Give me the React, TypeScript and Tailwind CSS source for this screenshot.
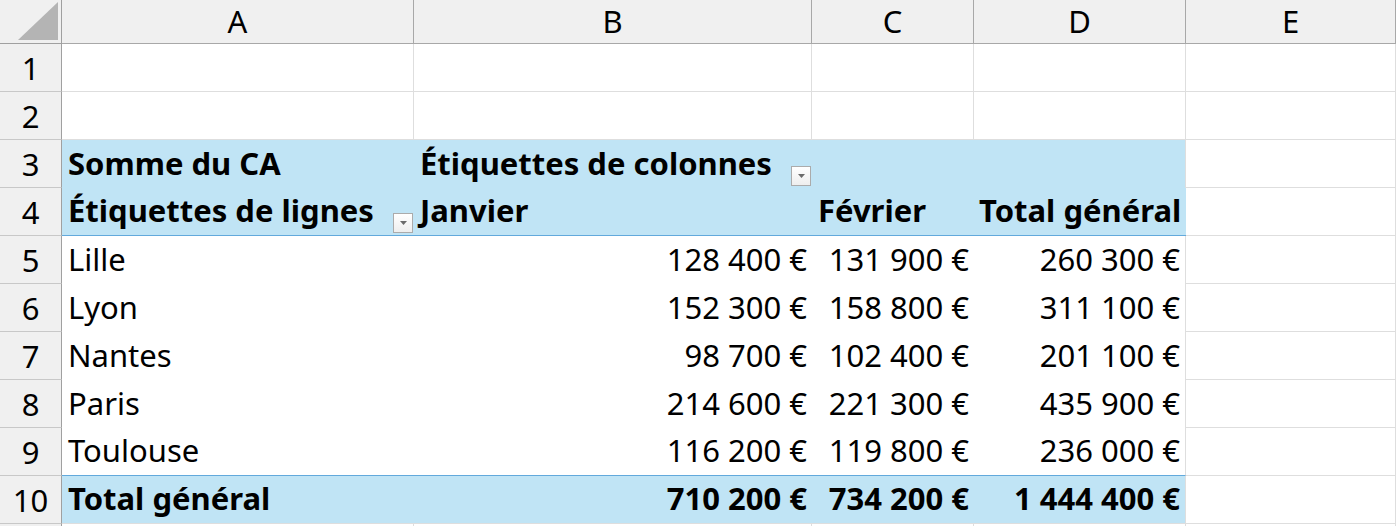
import React from "react";

const FONT = { fontFamily: '"Noto Sans", "Open Sans", Arial, sans-serif' };

function Dropdown() {
  return (
    <div className="absolute right-[1px] bottom-[2px] w-[20px] h-[20px] border border-[#ababab] bg-gradient-to-b from-white to-[#eeeeee] flex items-center justify-center">
      <svg width="7" height="4" viewBox="0 0 7 4">
        <path d="M0 0 H7 L3.5 4 Z" fill="#6b6b6b" />
      </svg>
    </div>
  );
}

type CellProps = {
  children?: React.ReactNode;
  cls?: string;
};

function Cell({ children, cls = "" }: CellProps) {
  return <div className={"relative flex items-end overflow-visible whitespace-nowrap " + cls}>{children}</div>;
}

const G = "border-r border-b border-[#dedede] bg-white";
const BLUE = "bg-[#c0e4f5]";
const ROWH = "border-r border-b border-[#c8c8c8] bg-[#f0f0f0] justify-center items-center text-[31px] text-black";

export default function App() {
  const rows: { city: string; b: string; c: string; d: string }[] = [
    { city: "Lille", b: "128 400 €", c: "131 900 €", d: "260 300 €" },
    { city: "Lyon", b: "152 300 €", c: "158 800 €", d: "311 100 €" },
    { city: "Nantes", b: "98 700 €", c: "102 400 €", d: "201 100 €" },
    { city: "Paris", b: "214 600 €", c: "221 300 €", d: "435 900 €" },
    { city: "Toulouse", b: "116 200 €", c: "119 800 €", d: "236 000 €" },
  ];

  const txt = "text-[31px] leading-[40px] text-black pb-[5px]";
  const rightTxt = txt + " justify-end pr-[5px]";
  const leftTxt = txt + " pl-[6px]";

  return (
    <div className="w-[1396px] h-[526px] overflow-hidden bg-white" style={FONT}>
      <div className="grid grid-cols-[62px_352px_398px_162px_212px_210px] grid-rows-[44px_repeat(11,48px)]">
        {/* Header row */}
        <div className="relative bg-[#f0f0f0] border-r border-b border-[#a0a0a0]">
          <svg className="absolute left-[18px] top-[2px]" width="40" height="38" viewBox="0 0 40 38">
            <path d="M40 0 V38 H0 Z" fill="#b4b4b4" />
          </svg>
        </div>
        {["A", "B", "C", "D", "E"].map((l) => (
          <div
            key={l}
            className="bg-[#f0f0f0] border-r border-b border-[#a8a8a8] flex items-center justify-center text-[31px] text-black"
          >
            {l}
          </div>
        ))}

        {/* Row 1 */}
        <Cell cls={ROWH + " border-r-[#a0a0a0]"}>1</Cell>
        <Cell cls={G} />
        <Cell cls={G} />
        <Cell cls={G} />
        <Cell cls={G} />
        <Cell cls={G} />

        {/* Row 2 */}
        <Cell cls={ROWH + " border-r-[#a0a0a0]"}>2</Cell>
        <Cell cls={G} />
        <Cell cls={G} />
        <Cell cls={G} />
        <Cell cls={G} />
        <Cell cls={G} />

        {/* Row 3 */}
        <Cell cls={ROWH + " border-r-[#a0a0a0]"}>3</Cell>
        <Cell cls={BLUE + " font-bold " + leftTxt}>Somme du CA</Cell>
        <Cell cls={BLUE + " font-bold " + leftTxt}>
          Étiquettes de colonnes
          <Dropdown />
        </Cell>
        <Cell cls={BLUE} />
        <Cell cls={BLUE + " border-r border-[#dedede]"} />
        <Cell cls={G} />

        {/* Row 4 */}
        <Cell cls={ROWH + " border-r-[#a0a0a0]"}>4</Cell>
        <Cell cls={BLUE + " font-bold border-b border-[#62a9dc] " + leftTxt}>
          Étiquettes de lignes
          <Dropdown />
        </Cell>
        <Cell cls={BLUE + " font-bold border-b border-[#62a9dc] " + leftTxt}>Janvier</Cell>
        <Cell cls={BLUE + " font-bold border-b border-[#62a9dc] " + leftTxt}>Février</Cell>
        <Cell cls={BLUE + " font-bold border-b border-[#62a9dc] " + txt + " pl-[5px]"}>Total général</Cell>
        <Cell cls={G} />

        {/* Data rows */}
        {rows.map((r, i) => {
          const last = i === rows.length - 1;
          const bb = last ? " border-b border-[#62a9dc]" : "";
          return (
            <React.Fragment key={r.city}>
              <Cell cls={ROWH + " border-r-[#a0a0a0]"}>{i + 5}</Cell>
              <Cell cls={"bg-white " + leftTxt + bb}>{r.city}</Cell>
              <Cell cls={"bg-white " + rightTxt + bb}>{r.b}</Cell>
              <Cell cls={"bg-white " + rightTxt + bb}>{r.c}</Cell>
              <Cell cls={"bg-white border-r border-r-[#dedede] " + rightTxt + bb}>{r.d}</Cell>
              <Cell cls={G} />
            </React.Fragment>
          );
        })}

        {/* Row 10 */}
        <Cell cls={ROWH + " border-r-[#a0a0a0]"}>10</Cell>
        <Cell cls={BLUE + " font-bold border-b border-[#dedede] " + leftTxt}>Total général</Cell>
        <Cell cls={BLUE + " font-bold border-b border-[#dedede] " + rightTxt}>710 200 €</Cell>
        <Cell cls={BLUE + " font-bold border-b border-[#dedede] " + rightTxt}>734 200 €</Cell>
        <Cell cls={BLUE + " font-bold border-b border-r border-[#dedede] " + rightTxt}>1 444 400 €</Cell>
        <Cell cls={G} />

        {/* Row 11 (only its top edge is in view) */}
        <Cell cls={ROWH + " border-r-[#a0a0a0]"} />
        <Cell cls={G} />
        <Cell cls={G} />
        <Cell cls={G} />
        <Cell cls={G} />
        <Cell cls={G} />
      </div>
    </div>
  );
}
